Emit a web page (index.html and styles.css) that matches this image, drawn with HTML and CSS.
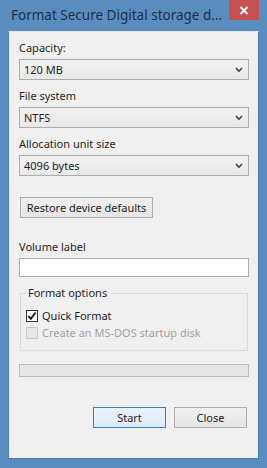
FILE: index.html
```html
<!DOCTYPE html>
<html lang="en">
<head>
  <meta charset="UTF-8" />
  <title>Format</title>
  <link rel="stylesheet" href="styles.css">
</head>
<body>
  <div class="window">
    <div class="titlebar">
      <span class="title">Format Secure Digital storage d...</span>
      <span class="close">
        <svg width="10" height="9" viewBox="0 0 10 9"><path d="M1.5 1 L8.5 8 M8.5 1 L1.5 8" stroke="#fff" stroke-width="1.8"/></svg>
      </span>
    </div>

    <div class="client">
      <div class="field">
        <label>Capacity:</label>
        <div class="select"><span>120 MB</span><svg width="8" height="6" viewBox="0 0 8 6"><path d="M1 1 L4 4.2 L7 1" fill="none" stroke="#3a3a3a" stroke-width="1.6"/></svg></div>
      </div>
      <div class="field">
        <label>File system</label>
        <div class="select"><span>NTFS</span><svg width="8" height="6" viewBox="0 0 8 6"><path d="M1 1 L4 4.2 L7 1" fill="none" stroke="#3a3a3a" stroke-width="1.6"/></svg></div>
      </div>
      <div class="field">
        <label>Allocation unit size</label>
        <div class="select"><span>4096 bytes</span><svg width="8" height="6" viewBox="0 0 8 6"><path d="M1 1 L4 4.2 L7 1" fill="none" stroke="#3a3a3a" stroke-width="1.6"/></svg></div>
      </div>

      <button class="btn restore">Restore device defaults</button>

      <div class="field volume">
        <label>Volume label</label>
        <div class="textbox"></div>
      </div>

      <fieldset class="options">
        <legend>Format options</legend>
        <div class="check">
          <span class="box checked"><svg width="11" height="10" viewBox="0 0 11 10"><path d="M1.5 5 L4.2 8 L9.5 1.2" fill="none" stroke="#111" stroke-width="2"/></svg></span>
          Quick Format
        </div>
        <div class="check disabled">
          <span class="box"></span>
          Create an MS-DOS startup disk
        </div>
      </fieldset>

      <div class="progress"></div>

      <div class="actions">
        <button class="btn start">Start</button>
        <button class="btn">Close</button>
      </div>
    </div>
  </div>
</body>
</html>
```

FILE: styles.css
```css
body {
  margin: 0;
  font-family: "Noto Sans", "Open Sans", sans-serif;
  font-size: 11px;
  color: #1e1e1e;
}

.window {
  width: 267px;
  height: 468px;
  background-color: #5a8dbf;
  display: flex;
  flex-direction: column;
  box-sizing: border-box;
}

.titlebar {
  height: 31px;
  display: flex;
  justify-content: space-between;
  align-items: flex-start;
  flex-shrink: 0;
}

.title {
  font-size: 13.5px;
  color: #1b2f4b;
  margin: 6px 0 0 11px;
  white-space: nowrap;
}

.close {
  width: 30px;
  height: 20px;
  flex-shrink: 0;
  margin-right: 8px;
  background-color: #c75050;
  display: flex;
  justify-content: center;
  align-items: center;
}

.client {
  flex: 1;
  margin: 0 8px 9px 8px;
  background-color: #f0f0f0;
  border: 1px solid #4b7eb0;
  border-top-color: #e6e6e6;
  padding: 8px 9px 0 10px;
  display: flex;
  flex-direction: column;
}

.field {
  display: flex;
  flex-direction: column;
  margin-bottom: 8px;
}

.field label {
  line-height: 16px;
  height: 16px;
  margin-bottom: 3px;
}

.select {
  height: 21px;
  box-sizing: border-box;
  border: 1px solid #acacac;
  background: linear-gradient(#f2f2f2, #e8e8e8);
  display: flex;
  justify-content: space-between;
  align-items: center;
  padding: 0 5px 0 4px;
}

.select svg {
  margin-top: 1px;
}

.btn {
  font-family: inherit;
  font-size: 11px;
  color: #1e1e1e;
  height: 21px;
  box-sizing: border-box;
  border: 1px solid #acacac;
  background: linear-gradient(#f0f0f0, #e5e5e5);
  padding: 0;
}

.restore {
  width: 133px;
  margin: 13px 0 0 1px;
  align-self: flex-start;
}

.volume {
  margin-top: 21px;
}

.textbox {
  height: 19px;
  box-sizing: border-box;
  border: 1px solid #abadb3;
  background-color: #fff;
}

.options {
  margin: 1px 1px 0 1px;
  border: 1px solid #dcdcdc;
  padding: 7px 5px 9px 5px;
}

.options legend {
  padding: 0 2px;
  margin-left: 0;
  line-height: 14px;
}

.check {
  display: flex;
  align-items: center;
  gap: 4px;
  height: 17px;
}

.box {
  width: 12px;
  height: 12px;
  box-sizing: border-box;
  border: 1px solid #c8c8c8;
  background-color: #e6e6e6;
  display: flex;
  justify-content: center;
  align-items: center;
}

.box.checked {
  border-color: #333;
  background-color: #fff;
}

.disabled {
  color: #a2a2a2;
}

.progress {
  margin-top: 13px;
  height: 13px;
  box-sizing: border-box;
  border: 1px solid #bcbcbc;
  background-color: #e6e6e6;
}

.actions {
  display: flex;
  justify-content: flex-end;
  gap: 8px;
  margin-top: 30px;
  padding-right: 2px;
}

.actions .btn {
  width: 73px;
}

.start {
  border-color: #3c7fb1;
  background: linear-gradient(#eaf3fb, #dcecfc);
}
```
